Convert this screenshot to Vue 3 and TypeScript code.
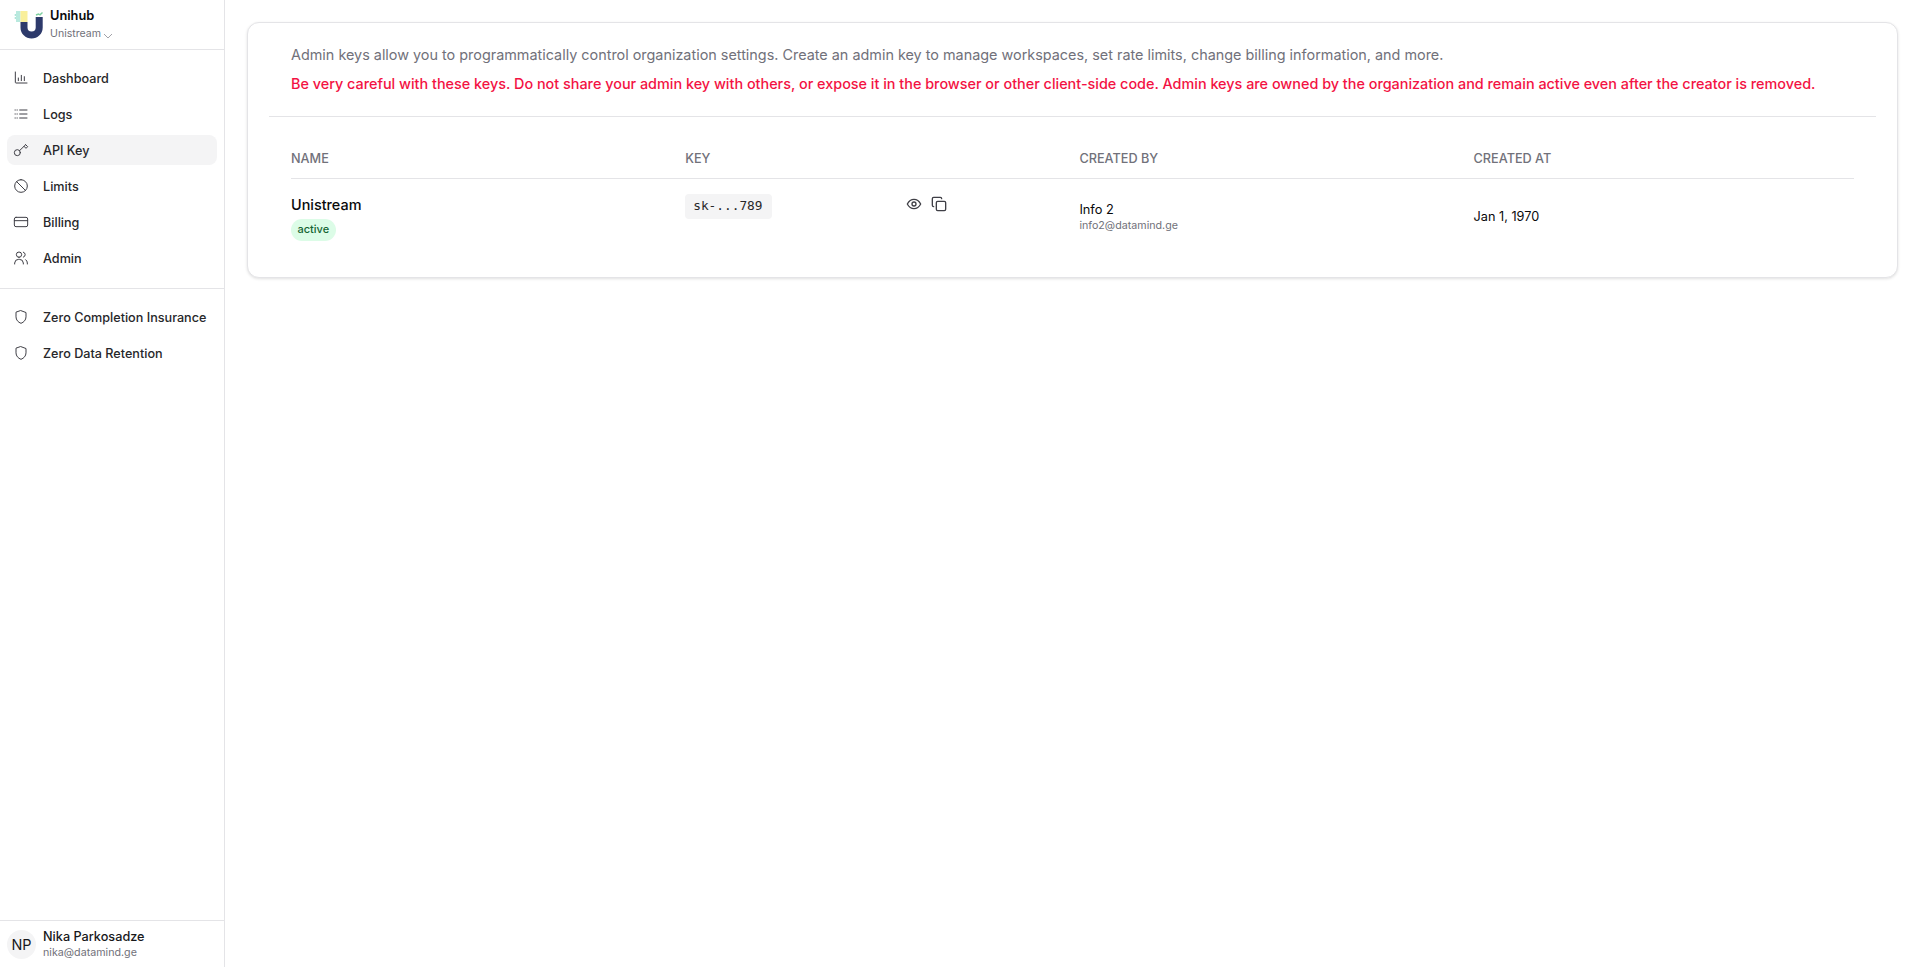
<script setup lang="ts">
interface NavItem { label: string; icon: string; active?: boolean }
const mainNav: NavItem[] = [
  { label: 'Dashboard', icon: 'chart' },
  { label: 'Logs', icon: 'list' },
  { label: 'API Key', icon: 'key', active: true },
  { label: 'Limits', icon: 'ban' },
  { label: 'Billing', icon: 'card' },
  { label: 'Admin', icon: 'users' },
]
const zeroNav: NavItem[] = [
  { label: 'Zero Completion Insurance', icon: 'shield' },
  { label: 'Zero Data Retention', icon: 'shield' },
]
const icons: Record<string, string[]> = {
  chart: ['M3.500 3v15.500a1 1 0 0 0 1 1H21', 'M8 16v-4', 'M12.500 16V8', 'M17 16v-6'],
  list: ['M3 6h.5', 'M6 6h.5', 'M3 12h.5', 'M6 12h.5', 'M3 18h.5', 'M6 18h.5', 'M10 6h11', 'M10 12h11', 'M10 18h11'],
  key: ['M9.800 13 19 4', 'M16.500 6.500l3 3 2.500-2.500-3-3', 'M11 16a4.500 4.500 0 1 1-9 0 4.500 4.500 0 0 1 9 0Z'],
  ban: ['M12 2.500a9.500 9.500 0 1 0 0 19 9.500 9.500 0 0 0 0-19Z', 'M5.300 5.300l13.400 13.400'],
  card: ['M4.500 5h15A2.500 2.500 0 0 1 22 7.500v9a2.500 2.500 0 0 1-2.500 2.500h-15A2.500 2.500 0 0 1 2 16.500v-9A2.500 2.500 0 0 1 4.500 5Z', 'M2 10h20'],
  users: ['M2.500 21v-1.500a6 6 0 0 1 6-5.500h1a6 6 0 0 1 6 5.500V21', 'M9 11a4 4 0 1 0 0-8 4 4 0 0 0 0 8Z', 'M15.500 3.200a4 4 0 0 1 0 7.600', 'M19 14.500a6 6 0 0 1 2.500 5V21'],
  shield: ['M12 2.500l7.500 2.800v6.500c0 4.700-3.200 8-7.500 9.700-4.300-1.700-7.500-5-7.500-9.700V5.300Z'],
}
</script>

<template>
  <div class="page">
    <aside class="sidebar">
      <header class="brand">
        <svg class="logo" viewBox="0 0 32 32" aria-hidden="true">
          <circle cx="1.500" cy="7" r="1" fill="#a9e2d6" />
          <circle cx="1.500" cy="10" r="1" fill="#a9e2d6" />
          <rect x="2" y="3" width="4.500" height="11" fill="#b9e9de" />
          <path d="M6.500 14v5.500a10.500 10.500 0 0 0 22.200 0V9h-7v10.500a3.600 3.600 0 0 1-8.200 0V14Z" fill="#2d3a6b" />
          <rect x="6.500" y="3" width="7" height="11" fill="#f9ef9b" />
          <path d="M22 7l2.500-1 1.500.800 2.500-2.300" fill="none" stroke="#7fd0a0" stroke-width="1.400" />
        </svg>
        <div class="brand-text">
          <div class="brand-name">Unihub</div>
          <div class="brand-org">
            Unistream
            <svg viewBox="0 0 10 6" width="10" height="6" aria-hidden="true"><path d="M1 1l4 4 4-4" fill="none" stroke="#8a8a92" stroke-width="0.800" /></svg>
          </div>
        </div>
      </header>

      <nav class="nav nav-main">
        <a v-for="item in mainNav" :key="item.label" class="nav-item" :class="{ active: item.active }">
          <svg class="nav-icon" viewBox="0 0 24 24" aria-hidden="true"><path v-for="d in icons[item.icon]" :key="d" :d="d" /></svg>
          <span>{{ item.label }}</span>
        </a>
      </nav>

      <nav class="nav nav-zero">
        <a v-for="item in zeroNav" :key="item.label" class="nav-item">
          <svg class="nav-icon" viewBox="0 0 24 24" aria-hidden="true"><path v-for="d in icons[item.icon]" :key="d" :d="d" /></svg>
          <span>{{ item.label }}</span>
        </a>
      </nav>

      <footer class="user">
        <div class="avatar">NP</div>
        <div class="user-text">
          <div class="user-name">Nika Parkosadze</div>
          <div class="user-mail">nika@datamind.ge</div>
        </div>
      </footer>
    </aside>

    <main class="main">
      <section class="card">
        <div class="intro">
          <p class="lead">Admin keys allow you to programmatically control organization settings. Create an admin key to manage workspaces, set rate limits, change billing information, and more.</p>
          <p class="warn">Be very careful with these keys. Do not share your admin key with others, or expose it in the browser or other client-side code. Admin keys are owned by the organization and remain active even after the creator is removed.</p>
        </div>
        <div class="table">
          <div class="row head">
            <div>NAME</div>
            <div>KEY</div>
            <div>CREATED BY</div>
            <div>CREATED AT</div>
          </div>
          <div class="row body">
            <div class="cell-name">
              <div class="key-name">Unistream</div>
              <span class="badge">active</span>
            </div>
            <div class="cell-key">
              <code class="key-code">sk-...789</code>
              <div class="key-actions">
                <svg viewBox="0 0 24 24" width="16" height="16" aria-hidden="true"><path d="M2 12s3.600-7 10-7 10 7 10 7-3.600 7-10 7-10-7-10-7Z" /><circle cx="12" cy="12" r="3" /></svg>
                <svg viewBox="0 0 24 24" width="16" height="16" aria-hidden="true"><rect x="8" y="8" width="14" height="14" rx="2" /><path d="M4 16c-1.100 0-2-.9-2-2V4c0-1.100.9-2 2-2h10c1.100 0 2 .9 2 2" /></svg>
              </div>
            </div>
            <div class="cell-creator">
              <div class="creator-name">Info 2</div>
              <div class="creator-mail">info2@datamind.ge</div>
            </div>
            <div class="cell-date">Jan 1, 1970</div>
          </div>
        </div>
      </section>
    </main>
  </div>
</template>

<style>
html, body { margin: 0; background: #fff; }
</style>

<style scoped>
.page {
  display: flex;
  height: 967px;
  overflow: hidden;
  font-family: Inter, "Noto Sans", sans-serif;
  color: #18181b;
  background: #fff;
}
.sidebar {
  width: 225px;
  flex: none;
  box-sizing: border-box;
  border-right: 1px solid #e4e4e7;
  display: flex;
  flex-direction: column;
}
.brand {
  height: 50px;
  box-sizing: border-box;
  border-bottom: 1px solid #e4e4e7;
  display: flex;
  align-items: center;
  padding: 0 0 1px 14px;
  gap: 4px;
}
.logo { flex: none; width: 32px; height: 32px; }
.brand-name { font-size: 12.800px; font-weight: 600; line-height: 16px; color: #09090b; }
.brand-org { font-size: 10.600px; line-height: 16px; margin-top: 2px; margin-bottom: -2px; color: #71717a; display: flex; align-items: center; gap: 2px; }
.brand-org svg { margin-top: 3px; }
.nav { display: flex; flex-direction: column; padding: 0 7px; }
.nav-main { padding-top: 10px; padding-bottom: 12px; border-bottom: 1px solid #e4e4e7; }
.nav-zero { padding-top: 10px; }
.nav-item {
  height: 36px;
  display: flex;
  align-items: center;
  gap: 14px;
  padding: 0 6px;
  font-size: 12.640px;
  font-weight: 500;
  white-space: nowrap;
  color: #27272a;
  border-radius: 8px;
  position: relative;
}
.nav-item.active::before {
  content: "";
  position: absolute;
  inset: 3px 0 3px 0;
  background: #f4f4f5;
  border-radius: 8px;
}
.nav-item > * { position: relative; }
.nav-icon {
  width: 16px;
  height: 16px;
  flex: none;
  fill: none;
  stroke: #3f3f46;
  stroke-width: 1.500;
  stroke-linecap: round;
  stroke-linejoin: round;
}
.user {
  margin-top: auto;
  height: 47px;
  box-sizing: border-box;
  border-top: 1px solid #e4e4e7;
  display: flex;
  align-items: center;
  padding-left: 7px;
  gap: 7px;
}
.avatar {
  width: 29px;
  height: 29px;
  border-radius: 50%;
  background: #f4f4f5;
  display: flex;
  align-items: center;
  justify-content: center;
  font-size: 14.400px;
  color: #18181b;
  flex: none;
}
.user-name { font-size: 12.700px; font-weight: 500; line-height: 16px; color: #18181b; }
.user-mail { font-size: 10.700px; line-height: 15px; color: #71717a; }
.main { flex: 1; min-width: 0; padding: 22px 22px 0; }
.card {
  box-sizing: border-box;
  height: 256px;
  border: 1px solid #e4e4e7;
  border-radius: 12px;
  box-shadow: 0 1px 3px rgba(0, 0, 0, 0.12);
  padding: 0 21px;
  background: #fff;
}
.intro { padding: 21px 22px 21px; border-bottom: 1px solid #e4e4e7; }
.lead, .warn { margin: 0; font-size: 14.400px; line-height: 22px; }
.lead { color: #71717a; }
.warn { color: #f31243; font-weight: 500; margin-top: 7px; }
.table { padding: 0 22px; }
.row { display: grid; grid-template-columns: 394.200px 394.200px 394.200px 1fr; }
.head {
  height: 62px;
  box-sizing: border-box;
  align-items: end;
  padding-bottom: 11px;
  border-bottom: 1px solid #e4e4e7;
  font-size: 12.700px;
  line-height: 16px;
  font-weight: 500;
  color: #71717a;
}
.body { height: 76px; font-size: 12.800px; color: #09090b; }
.cell-name { padding-top: 16px; }
.key-name { font-size: 14.400px; font-weight: 500; line-height: 20px; color: #09090b; }
.badge {
  display: inline-block;
  margin-top: 4px;
  height: 22px;
  line-height: 21px;
  padding: 0 6.500px;
  border-radius: 11px;
  background: #dcfce7;
  color: #166534;
  font-size: 11px;
  font-weight: 500;
}
.cell-key { display: flex; align-items: flex-start; padding-top: 15px; }
.key-code {
  width: 87px;
  height: 25px;
  box-sizing: border-box;
  background: #f4f4f5;
  border-radius: 4px;
  padding: 0 8px;
  font-family: "DejaVu Sans Mono", "Liberation Mono", monospace;
  font-size: 12.800px;
  line-height: 24px;
  color: #27272a;
}
.key-actions { display: flex; align-items: center; gap: 9px; margin-left: 134px; margin-top: 2px; }
.key-actions svg { fill: none; stroke: #3f3f46; stroke-width: 2; stroke-linecap: round; stroke-linejoin: round; }
.cell-creator { padding-top: 22px; }
.creator-name { font-size: 12.800px; line-height: 17px; }
.creator-mail { font-size: 10.700px; line-height: 15px; color: #71717a; }
.cell-date { padding-top: 28px; font-size: 12.700px; line-height: 20px; }
</style>
